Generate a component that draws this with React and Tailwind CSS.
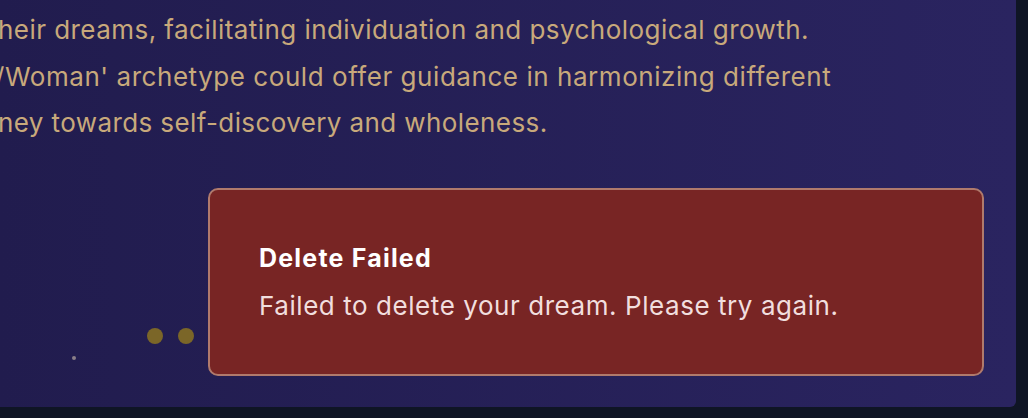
import React from "react";

const lines = [
  { text: "heir dreams, facilitating individuation and psychological growth.", offset: "ml-[-2px]", spacing: "tracking-[0.45px]" },
  { text: "/Woman' archetype could offer guidance in harmonizing different", offset: "ml-[-5px]", spacing: "tracking-[0.55px]" },
  { text: "ney towards self-discovery and wholeness.", offset: "ml-[-2px]", spacing: "tracking-[0.4px]" },
];

const App = () => {
  return (
    <div className="h-[418px] w-full bg-[#0f1525] overflow-hidden font-['Inter','Liberation_Sans',sans-serif]">
      <div className="relative w-[1016px] h-[407px] rounded-br-md overflow-hidden bg-linear-to-r from-[#211c4e] to-[#2a2460]">
        {/* Interpretation text, cut off on the left */}
        <div className="pt-[7px] text-[26px] leading-[46.5px] text-[#c8a97b]">
          {lines.map((line) => (
            <div key={line.text} className={`whitespace-nowrap ${line.offset} ${line.spacing}`}>
              {line.text}
            </div>
          ))}
        </div>

        {/* Loading dots */}
        <div className="mt-[181px] flex items-center gap-[15px] pl-[147px]">
          <span className="block w-4 h-4 rounded-full bg-[#7b6628]"></span>
          <span className="block w-4 h-4 rounded-full bg-[#7b6628]"></span>
          <span className="block w-4 h-4 rounded-full bg-[#7b6628]"></span>
        </div>
        <div className="mt-[12px] ml-[72px] w-[4px] h-[4px] rounded-full bg-[#8a7f88]"></div>

        {/* Toast */}
        <div className="absolute left-[208px] top-[188px] w-[776px] h-[188px] rounded-[10px] border-2 border-[#b07a6c] bg-[#782524] flex flex-col justify-center pl-[49px]">
          <div className="text-[25px] font-bold tracking-[1.2px] text-white leading-[32px]">Delete Failed</div>
          <div className="mt-[16px] text-[26px] tracking-[0.56px] text-[#f1dede] leading-[32px]">
            Failed to delete your dream. Please try again.
          </div>
        </div>
      </div>
    </div>
  );
};

export default App;
